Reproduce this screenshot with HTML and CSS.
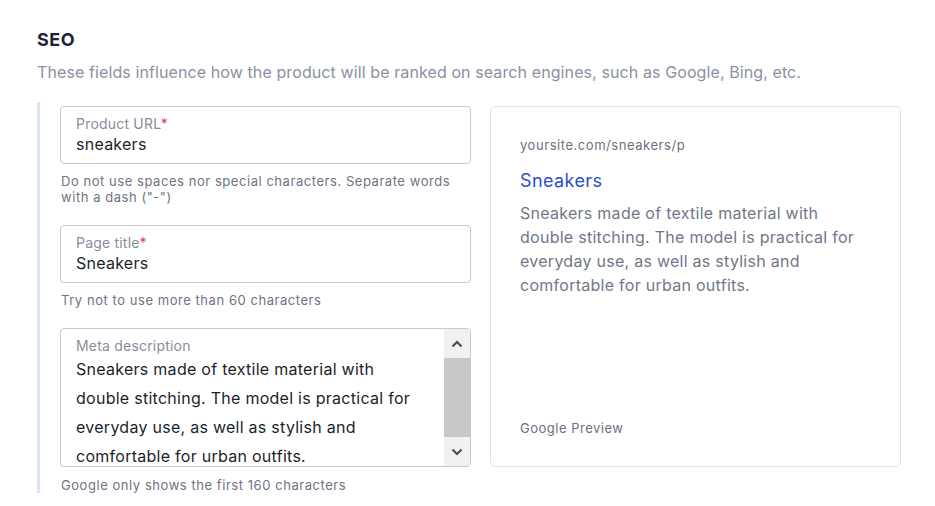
FILE: index.html
```html
<!DOCTYPE html>
<html lang="en">
<head>
<meta charset="utf-8">
<title>SEO</title>
<link rel="stylesheet" href="styles.css">
</head>
<body>
<section class="seo">
  <h2 class="seo-title">SEO</h2>
  <p class="seo-sub">These fields influence how the product will be ranked on search engines, such as Google, Bing, etc.</p>
  <div class="seo-body">
    <div class="fields">
      <div class="group">
        <div class="field">
          <div class="label">Product URL<span class="req">*</span></div>
          <div class="value">sneakers</div>
        </div>
        <p class="help">Do not use spaces nor special characters. Separate words with a dash ("-")</p>
      </div>
      <div class="group">
        <div class="field">
          <div class="label">Page title<span class="req">*</span></div>
          <div class="value">Sneakers</div>
        </div>
        <p class="help">Try not to use more than 60 characters</p>
      </div>
      <div class="group last">
        <div class="field area">
          <div class="area-main">
            <div class="label">Meta description</div>
            <div class="area-text">Sneakers made of textile material with double stitching. The model is practical for everyday use, as well as stylish and comfortable for urban outfits.</div>
          </div>
          <div class="scrollbar">
            <div class="sb-btn"><svg width="12" height="8" viewBox="0 0 12 8"><path d="M1.5 6.5 L6 2 L10.5 6.5" fill="none" stroke="#4f4f4f" stroke-width="2.2"/></svg></div>
            <div class="sb-thumb"></div>
            <div class="sb-btn"><svg width="12" height="8" viewBox="0 0 12 8"><path d="M1.5 1.5 L6 6 L10.5 1.5" fill="none" stroke="#4f4f4f" stroke-width="2.2"/></svg></div>
          </div>
        </div>
        <p class="help">Google only shows the first 160 characters</p>
      </div>
    </div>
    <div class="preview">
      <div class="pv-url">yoursite.com/sneakers/p</div>
      <div class="pv-title">Sneakers</div>
      <p class="pv-desc">Sneakers made of textile material with double stitching. The model is practical for everyday use, as well as stylish and comfortable for urban outfits.</p>
      <div class="pv-foot">Google Preview</div>
    </div>
  </div>
</section>
</body>
</html>
```

FILE: styles.css
```css
* { box-sizing: border-box; }
body {
  margin: 0;
  background: #ffffff;
  font-family: Inter, "Open Sans", Roboto, sans-serif;
  color: #1c1f2a;
}
.seo {
  padding: 28px 0 0 37px;
}
.seo-title {
  margin: 0;
  font-size: 18px;
  line-height: 24px;
  font-weight: 700;
  color: #1f2433;
  letter-spacing: 0.5px;
}
.seo-sub {
  margin: 8px 0 0;
  font-size: 16px;
  line-height: 24px;
  color: #8b90a5;
  letter-spacing: 0.1px;
}
.seo-body {
  display: flex;
  align-items: flex-start;
  gap: 19px;
  margin-top: 18px;
}
.fields {
  width: 434px;
  border-left: 3px solid #dbe3f6;
  padding: 4px 0 0 20px;
}
.group { margin-bottom: 20px; }
.group.last { margin-bottom: 0; }
.field {
  border: 1px solid #c6c8d2;
  border-radius: 4px;
  padding: 8px 15px;
  background: #fff;
}
.label {
  font-size: 14px;
  line-height: 18px;
  color: #8a8d9c;
  letter-spacing: 0.2px;
}
.req { color: #d9415b; }
.value {
  font-size: 16px;
  line-height: 22px;
  color: #1c1f2a;
  letter-spacing: 0.25px;
}
.help {
  margin: 9px 0 0 1px;
  font-size: 13px;
  line-height: 16px;
  color: #6f7385;
  letter-spacing: 0.55px;
}
.group.last .help { margin-top: 10px; }
.field.area {
  display: flex;
  padding: 0;
  height: 139px;
  overflow: hidden;
}
.area-main {
  flex: 1;
  padding: 8px 28px 0 15px;
  overflow: hidden;
}
.area-text {
  font-size: 16px;
  line-height: 29px;
  color: #1c1f2a;
  letter-spacing: 0.27px;
}
.scrollbar {
  width: 26px;
  display: flex;
  flex-direction: column;
  background: #f1f1f1;
}
.sb-btn {
  height: 29px;
  display: flex;
  align-items: center;
  justify-content: center;
}
.sb-thumb {
  flex: 1;
  background: #c8c8c8;
}
.preview {
  width: 411px;
  height: 361px;
  border: 1px solid #e3e4ea;
  border-radius: 5px;
  padding: 29px 29px 29px;
  display: flex;
  flex-direction: column;
  margin-top: 4px;
}
.pv-url {
  font-size: 13px;
  line-height: 18px;
  color: #6e7180;
  letter-spacing: 0.55px;
}
.pv-title {
  margin-top: 15px;
  font-size: 18px;
  line-height: 24px;
  color: #2a4fc4;
  letter-spacing: 0.4px;
}
.pv-desc {
  margin: 8px 0 0;
  font-size: 16px;
  line-height: 24px;
  color: #72768a;
  letter-spacing: 0.27px;
}
.pv-foot {
  margin-top: auto;
  font-size: 13px;
  line-height: 18px;
  color: #6e7180;
  letter-spacing: 0.5px;
}
```
